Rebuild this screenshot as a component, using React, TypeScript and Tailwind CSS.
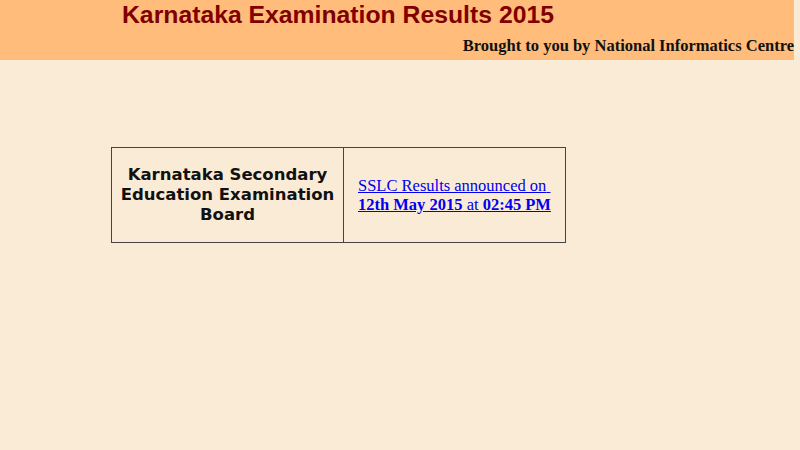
export default function App() {
  return (
    <div className="min-h-[450px] w-[800px] bg-[#faebd7]">
      <div className="h-[60px] w-[794px] bg-[#ffbc7a]">
        <h1 className="pl-[122px] pt-[1px] font-['Liberation_Sans',Arial,sans-serif] text-[24.75px] font-bold leading-[28px] text-[#800000]">
          Karnataka Examination Results 2015
        </h1>
        <p className="mt-[7px] text-right font-['Liberation_Serif','Times_New_Roman',serif] text-[16.5px] font-bold leading-[20px] text-[#111]">
          Brought to you by National Informatics Centre
        </p>
      </div>
      <div className="pl-[111px] pt-[87px]">
        <table className="border-collapse">
          <tbody>
            <tr className="h-[95px]">
              <td className="w-[232px] border border-[#444] px-1 text-center font-['DejaVu_Sans',Verdana,sans-serif] text-[16.5px] font-bold leading-[20px] text-[#111]">
                Karnataka Secondary Education Examination Board
              </td>
              <td className="w-[222px] border border-[#444] px-[14px] font-['Liberation_Serif','Times_New_Roman',serif] text-[16.5px] leading-[19px]">
                <a href="#" className="text-[#0000ee] underline">
                  SSLC Results announced on{"\u00a0"}
                  <br />
                  <b>12th May 2015</b> at <b>02:45 PM</b>
                </a>
              </td>
            </tr>
          </tbody>
        </table>
      </div>
    </div>
  );
}
